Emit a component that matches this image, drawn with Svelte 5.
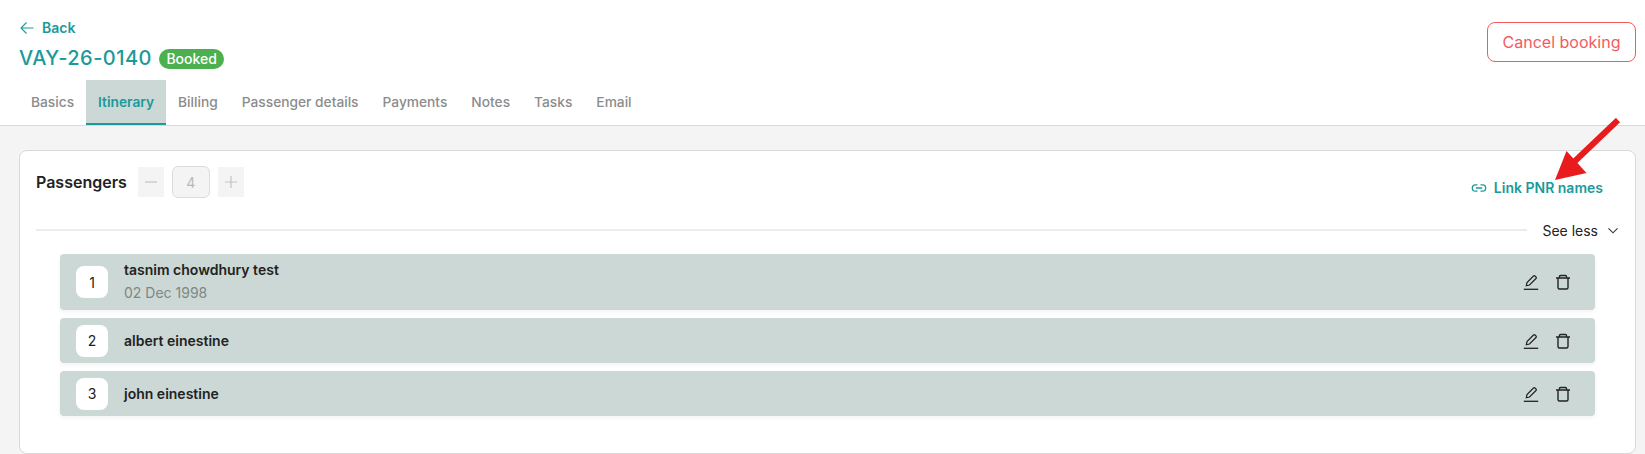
<script>
  const tabs = ['Basics', 'Itinerary', 'Billing', 'Passenger details', 'Payments', 'Notes', 'Tasks', 'Email'];
  const passengers = [
    { n: 1, name: 'tasnim chowdhury test', dob: '02 Dec 1998' },
    { n: 2, name: 'albert einestine' },
    { n: 3, name: 'john einestine' }
  ];
</script>

<div class="page">
  <header class="header">
    <div class="top">
      <div>
        <a class="back" href="#back">
          <svg width="16" height="16" viewBox="0 0 16 16" fill="none" stroke="currentColor" stroke-width="1.1"><path d="M14.5 8H2.5M7.5 2.5 2 8l5.500 5.500"/></svg>
          <span>Back</span>
        </a>
        <div class="title-row">
          <h1>VAY-26-0140</h1>
          <span class="badge">Booked</span>
        </div>
      </div>
      <button class="cancel">Cancel booking</button>
    </div>
    <nav class="tabs">
      {#each tabs as t}
        <span class="tab" class:active={t === 'Itinerary'}>{t}</span>
      {/each}
    </nav>
  </header>

  <main class="main">
    <section class="card">
      <div class="card-head">
        <div class="pax">
          <span class="pax-title">Passengers</span>
          <span class="step"><svg width="14" height="14" viewBox="0 0 14 14" stroke="#c4c4c4" stroke-width="1.200"><path d="M1 7h12"/></svg></span>
          <span class="count">4</span>
          <span class="step"><svg width="14" height="14" viewBox="0 0 14 14" stroke="#c4c4c4" stroke-width="1.200"><path d="M1 7h12M7 1v12"/></svg></span>
        </div>
        <a class="link" href="#link">
          <svg width="16" height="16" viewBox="0 0 16 16" fill="none" stroke="currentColor" stroke-width="1.300"><path d="M6.500 4.800H4.500a3.200 3.200 0 0 0 0 6.400h2M9.500 4.800h2a3.200 3.200 0 0 1 0 6.400h-2M4.800 8h6.400"/></svg>
          <span>Link PNR names</span>
        </a>
      </div>

      <div class="divider-row">
        <div class="line"></div>
        <span class="see">See less</span>
        <svg width="12" height="12" viewBox="0 0 12 12" fill="none" stroke="#333" stroke-width="1.100"><path d="M1.500 4.300 6 8.800l4.500-4.500"/></svg>
      </div>

      <div class="list">
        {#each passengers as p}
          <div class="row">
            <span class="num">{p.n}</span>
            <div class="info">
              <div class="name">{p.name}</div>
              {#if p.dob}<div class="dob">{p.dob}</div>{/if}
            </div>
            <div class="actions">
              <svg width="16" height="16" viewBox="0 0 16 16" fill="none" stroke="#222" stroke-width="1.200"><path d="M.8 15.300h14.400" stroke-width="1.300"/><path d="M3.300 11.800l.7-3.200L10.500 2a1 1 0 0 1 1.500 0l1 1a1 1 0 0 1 0 1.500L6.500 11z"/></svg>
              <svg width="16" height="16" viewBox="0 0 16 16" fill="none" stroke="#222" stroke-width="1.400"><path d="M1 4h14M3 4v9.500A1.500 1.500 0 0 0 4.500 15h7a1.500 1.500 0 0 0 1.500-1.500V4M4.500 4V2.500A1 1 0 0 1 5.500 1.500h5a1 1 0 0 1 1 1V4"/></svg>
            </div>
          </div>
        {/each}
      </div>
    </section>
  </main>

  <svg class="annot" width="80" height="76" viewBox="0 0 80 76"><path d="M73 2 29 44" stroke="#e81c1c" stroke-width="6" fill="none"/><path d="M10 62 21.500 33 41.500 55z" fill="#e81c1c"/></svg>
</div>

<style>
  :global(body) { margin: 0; background: #f4f4f4; }
  .page {
    position: relative;
    width: 1645px;
    height: 454px;
    overflow: hidden;
    font-family: Inter, "Liberation Sans", sans-serif;
    background: #f4f4f4;
  }
  .header {
    box-sizing: border-box;
    background: #fff;
    border-bottom: 1px solid #d9d9d9;
    padding: 20px 9px 0 19px;
    height: 126px;
  }
  .top { display: flex; justify-content: space-between; align-items: flex-start; height: 60px; }
  .back {
    display: flex;
    align-items: center;
    gap: 7px;
    color: #1a9a9a;
    font-size: 14px;
    font-weight: 600;
    line-height: 16px;
    text-decoration: none;
  }
  .title-row { display: flex; align-items: center; gap: 7px; margin-top: 8px; }
  h1 { margin: 0; font-size: 20px; font-weight: 500; line-height: 28px; color: #1a9a9a; letter-spacing: 0.45px; }
  .badge {
    background: #4caf50;
    color: #fff;
    font-size: 14px;
    font-weight: 500;
    line-height: 20px;
    padding: 0 7.5px;
    border-radius: 10px;
    margin-top: 1px;
  }
  .cancel {
    margin-top: 2px;
    width: 149px;
    height: 40px;
    background: #fff;
    border: 1px solid #f55a5f;
    border-radius: 8px;
    color: #f55a5f;
    font: 400 16px Inter, sans-serif;
    padding: 0;
  }
  .tabs { display: flex; height: 45px; }
  .tab {
    box-sizing: border-box;
    height: 45px;
    padding: 0 12px;
    display: flex;
    align-items: center;
    font-size: 13.75px;
    font-weight: 500;
    color: #8c8c8c;
    border-bottom: 2px solid transparent;
  }
  .tab.active { background: #ccd8d5; color: #1a9a9a; font-weight: 600; border-bottom-color: #1a9a9a; }
  .main { padding: 24px 9px 0 19px; }
  .card {
    box-sizing: border-box;
    height: 304px;
    background: #fff;
    border: 1px solid #d9d9d9;
    border-radius: 8px;
    padding: 15px 16px 0;
  }
  .card-head { display: flex; justify-content: space-between; align-items: flex-start; height: 64px; }
  .pax { display: flex; align-items: center; }
  .pax-title { font-size: 16px; font-weight: 600; color: #222; margin-right: 11px; }
  .step {
    width: 26px;
    height: 30px;
    background: #f4f4f4;
    display: flex;
    align-items: center;
    justify-content: center;
  }
  .count {
    box-sizing: border-box;
    width: 38px;
    height: 32px;
    margin: 0 8px;
    background: #f4f4f4;
    border: 1px solid #dcdcdc;
    border-radius: 6px;
    color: #b8b8b8;
    font-size: 14px;
    display: flex;
    align-items: center;
    justify-content: center;
  }
  .link {
    display: flex;
    align-items: center;
    gap: 7px;
    margin: 13px 16px 0 0;
    color: #1a9a9a;
    font-size: 14px;
    font-weight: 600;
    text-decoration: none;
  }
  .divider-row { display: flex; align-items: center; height: 0; }
  .line { flex: 1; height: 2px; background: #ececec; }
  .see { margin: 0 9px 0 15px; font-size: 14px; font-weight: 400; color: #222; }
  .list { display: flex; flex-direction: column; gap: 8px; margin: 24px 24px 0; }
  .row {
    box-sizing: border-box;
    min-height: 45px;
    background: #ccd8d5;
    border-radius: 4px;
    display: flex;
    align-items: center;
    padding: 6.5px 16px;
    box-shadow: 0 2px 4px rgba(0,0,0,0.05);
  }
  .row:first-child { padding: 5px 16px; min-height: 56px; }
  .num {
    width: 32px;
    height: 32px;
    background: #fff;
    border-radius: 8px;
    display: flex;
    align-items: center;
    justify-content: center;
    font-size: 14px;
    color: #222;
    flex: none;
  }
  .info { flex: 1; margin-left: 16px; }
  .name { font-size: 14px; font-weight: 600; color: #222; line-height: 18px; }
  .dob { font-size: 14px; color: #7e8786; line-height: 20px; margin-top: 4px; }
  .actions { display: flex; gap: 16px; margin-right: 8px; }
  .annot { position: absolute; left: 1545px; top: 118px; }
</style>
